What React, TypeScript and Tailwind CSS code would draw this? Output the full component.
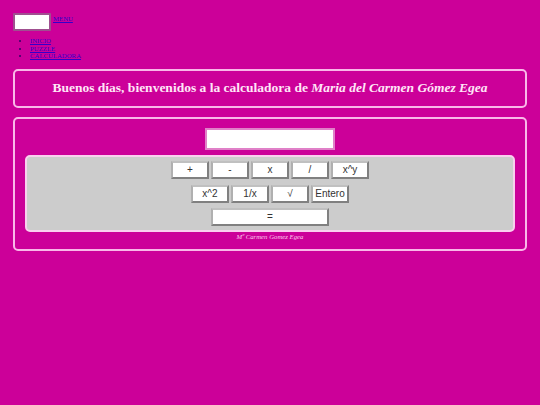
const ops = ['+', '-', 'x', '/', 'x^y'];
const ops2 = ['x^2', '1/x', '√'];

function CalcButton({ label, className = 'w-[38px]' }: { label: string; className?: string }) {
  return (
    <button
      type="button"
      className={`h-[18px] bg-white border-2 border-t-[#c0c0c0] border-l-[#b0b0b0] border-r-[#808080] border-b-[#808080] text-[10px] leading-none text-[#333] ${className}`}
      style={{ fontFamily: '"Liberation Sans", sans-serif' }}
    >
      {label}
    </button>
  );
}

export default function App() {
  return (
    <div className="min-h-[405px] bg-[#cc0099] px-[13px] pt-[13px] font-['Liberation_Serif',serif] text-[6.75px] leading-[8px]">
      {/* Menu */}
      <div className="flex items-start gap-[2px]">
        <input type="text" className="w-[38px] h-[18px] bg-white border-2 border-[#a04f90] rounded-[1px]" />
        <a href="#" className="mt-[2px] text-[#3300cc] underline">MENU</a>
      </div>
      <ul className="list-disc pl-[17px] mt-[6px] text-[#330066]">
        <li className="h-[7.5px]"><a href="#" className="text-[#3300cc] underline">INICIO</a></li>
        <li className="h-[7.5px]"><a href="#" className="text-[#3300cc] underline">PUZZLE</a></li>
        <li className="h-[7.5px]"><a href="#" className="text-[#3300cc] underline">CALCULADORA</a></li>
      </ul>

      {/* Saludo */}
      <div className="mt-[9px] h-[39px] flex items-center justify-center border-2 border-[#f9b8e8] rounded-[5px]">
        <h1 className="text-[13.5px] leading-none font-bold text-[#ffe6f7]">
          Buenos días, bienvenidos a la calculadora de <i className="font-bold">Maria del Carmen Gómez Egea</i>
        </h1>
      </div>

      {/* Calculadora */}
      <div className="mt-[9px] h-[134px] px-[10px] pt-[9px] border-2 border-[#f9b8e8] rounded-[5px]">
        <div className="flex justify-center">
          <input type="text" className="w-[130px] h-[22px] bg-white border-2 border-[#e080c8]" />
        </div>
        <div className="mt-[5px] h-[77px] bg-[#cccccc] border-2 border-[#f9d0ee] rounded-[5px] flex flex-col items-center pt-[4px]">
          <div className="flex gap-[2px]">
            {ops.map((op) => (
              <CalcButton key={op} label={op} />
            ))}
          </div>
          <div className="flex gap-[2px] mt-[6px]">
            {ops2.map((op) => (
              <CalcButton key={op} label={op} />
            ))}
            <CalcButton label="Entero" />
          </div>
          <div className="mt-[5px]">
            <CalcButton label="=" className="w-[118px]" />
          </div>
        </div>
        <p className="mt-[1px] text-center italic text-[6.75px] leading-[8px] text-[#ffccee]">Mª Carmen Gomez Egea</p>
      </div>
    </div>
  );
}
